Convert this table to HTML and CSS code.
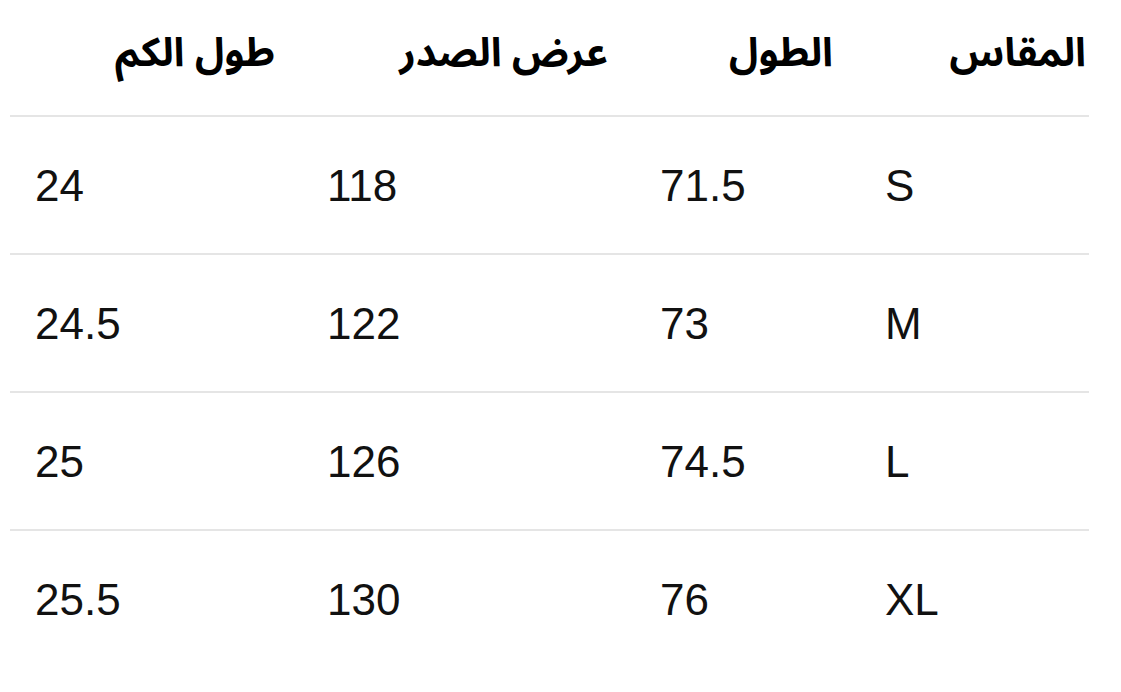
FILE: index.html
```html
<!DOCTYPE html>
<html lang="ar" dir="rtl">
<head>
<meta charset="utf-8">
<title>جدول المقاسات</title>
<link rel="stylesheet" href="styles.css">
</head>
<body>
<div class="size-table">
  <div class="row head">
    <div class="cell th first">المقاس</div>
    <div class="cell th">الطول</div>
    <div class="cell th">عرض الصدر</div>
    <div class="cell th">طول الكم</div>
  </div>
  <div class="row">
    <div class="cell td">S</div>
    <div class="cell td">71.5</div>
    <div class="cell td">118</div>
    <div class="cell td">24</div>
  </div>
  <div class="row">
    <div class="cell td">M</div>
    <div class="cell td">73</div>
    <div class="cell td">122</div>
    <div class="cell td">24.5</div>
  </div>
  <div class="row">
    <div class="cell td">L</div>
    <div class="cell td">74.5</div>
    <div class="cell td">126</div>
    <div class="cell td">25</div>
  </div>
  <div class="row">
    <div class="cell td">XL</div>
    <div class="cell td">76</div>
    <div class="cell td">130</div>
    <div class="cell td">25.5</div>
  </div>
</div>
</body>
</html>
```

FILE: styles.css
```css
html, body {
  margin: 0;
  padding: 0;
  background: #ffffff;
}

body {
  direction: rtl;
}

.size-table {
  width: 1079px;
  margin-left: 10px;
  margin-right: auto;
}

.row {
  display: grid;
  grid-template-columns: 229px 225px 333px 292px;
  height: 136px;
  align-items: center;
  border-top: 2px solid #e5e5e5;
}

.row.head {
  height: 115px;
  border-top: none;
}

.cell {
  white-space: nowrap;
}

.th {
  font-family: "Noto Sans Arabic", "DejaVu Sans", sans-serif;
  font-weight: bold;
  font-size: 40px;
  color: #000000;
  text-align: right;
  padding-right: 27px;
  padding-bottom: 8px;
}

.th.first {
  padding-right: 3px;
}

.td {
  font-family: "Liberation Sans", Arial, sans-serif;
  font-size: 44px;
  color: #111111;
  text-align: left;
  padding-left: 25px;
  padding-top: 2px;
  direction: ltr;
}
```
